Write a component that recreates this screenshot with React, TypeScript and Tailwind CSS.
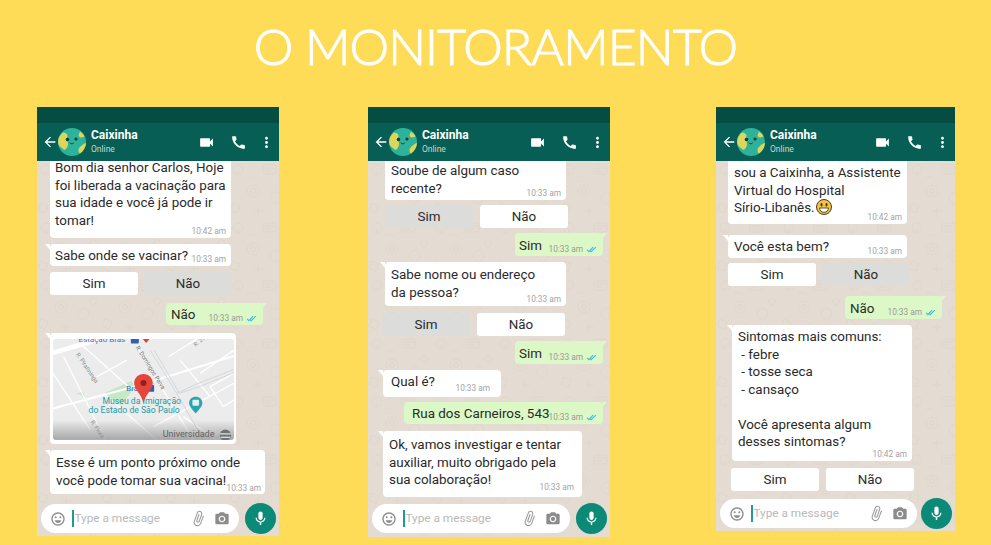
import type React from "react"
import {
  MdArrowBack,
  MdAttachFile,
  MdCall,
  MdCameraAlt,
  MdMic,
  MdMoreVert,
  MdOutlineEmojiEmotions,
  MdVideocam,
} from "react-icons/md"

const Ticks = () => (
  <svg viewBox="0 0 16 10" className="ml-[3px] h-[7px] w-[12px]" fill="none" stroke="#3fb8e8" strokeWidth="1.500">
    <path d="M1 5.500l2.600 2.600L9.500 1.500" />
    <path d="M5.500 7l1.200 1.100L13.500 1.500" />
  </svg>
)

const Avatar = () => (
  <svg viewBox="0 0 28 28" className="h-7 w-7 shrink-0">
    <circle cx="14" cy="14" r="14" fill="#2db39b" />
    <path d="M5 4.500C9 5 10.500 7.500 9 10c-1 2 1.500 3.500 1 6.500-.4 2.600-2 5-3.500 5.500C2.500 19.500 0 17 0 14 0 10 2 7 5 4.500z" fill="#dcd75c" />
    <path d="M22 3.500c2 1.500 3.500 3 4.500 5l-3 1c-2 .2-3-1-2.800-2.800z" fill="#dcd75c" />
    <path d="M28 15c-.3 4.500-2.500 8-6 10.500-2.500-2-1.500-5.500.5-7 1.500-1.500 3.500-3 5.500-3.500z" fill="#dcd75c" />
    <circle cx="9.500" cy="11.500" r="1.800" fill="#1c3b34" />
    <circle cx="18" cy="11" r="1.600" fill="#1c3b34" />
    <path d="M12 15c1 1.200 2.500 1.200 3.500 0" fill="none" stroke="#1c3b34" strokeWidth="1" strokeLinecap="round" />
  </svg>
)

const Doodles = () => (
  <svg className="absolute inset-0 h-full w-full" aria-hidden="true">
    <defs>
      <pattern id="doodle" width="64" height="58" patternUnits="userSpaceOnUse">
        <g fill="none" stroke="#dcd4c9" strokeWidth="0.7">
          <circle cx="9" cy="9" r="5" />
          <path d="M7 8h.5M11 8h.5M7 11c1.500 1 2.500 1 4 0" />
          <rect x="34" y="4" width="13" height="9" rx="2" />
          <path d="M36 7h9M36 10h6" />
          <path d="M56 20l4 4-4 4-4-4z" />
          <circle cx="24" cy="30" r="6" />
          <circle cx="24" cy="30" r="2.500" />
          <path d="M42 34c3-4 7-4 9 0s-1 8-5 9c-3-1-7-5-4-9z" />
          <path d="M4 42l7 3-3 7-7-3z" />
          <path d="M25 50h9M29 46v8" />
          <path d="M18 16c3-2 5 2 8 0" />
        </g>
      </pattern>
    </defs>
    <rect width="100%" height="100%" fill="url(#doodle)" />
  </svg>
)

const Tail = ({ right }: { right?: boolean }) =>
  right ? (
    <span className="absolute top-0 -right-[4px] h-0 w-0 border-t-[6px] border-r-[5px] border-t-[#dcf8c6] border-r-transparent" />
  ) : (
    <span className="absolute top-0 -left-[5px] h-0 w-0 border-t-[6px] border-l-[5px] border-t-white border-l-transparent" />
  )

interface BubbleProps {
  className: string
  time?: string
  tail?: boolean
  timeClass?: string
  children: React.ReactNode
}

// received message
const Bubble = ({ className, time = "10:33 am", tail, timeClass = "right-[5px] bottom-[1px]", children }: BubbleProps) => (
  <div className={`relative rounded-[4px] bg-white text-[13.400px] leading-[17.500px] whitespace-pre text-[#2a2a2a] ${className}`}>
    {tail && <Tail />}
    {children}
    <span className={`absolute text-[8.300px] leading-[11px] text-[#a3a3a3] ${timeClass}`}>{time}</span>
  </div>
)

// sent message
const Sent = ({ className, children }: { className: string; children: React.ReactNode }) => (
  <div className={`relative rounded-[4px] bg-[#dcf8c6] text-[13.400px] leading-[17.500px] text-[#2a2a2a] ${className}`}>
    <Tail right />
    {children}
    <span className="absolute right-[5px] bottom-[1px] flex items-center text-[8.300px] leading-[11px] text-[#9a9a9a]">
      10:33 am
      <Ticks />
    </span>
  </div>
)

const Choice = ({ label, selected }: { label: string; selected?: boolean }) => (
  <div
    className={`flex h-[23px] w-[88px] items-center justify-center rounded-[3px] pt-px text-[13.400px] text-[#2a2a2a] ${
      selected ? "bg-[#dcdcdb]" : "bg-white"
    }`}
  >
    {label}
  </div>
)

const InputBar = ({ className, barClass }: { className: string; barClass: string }) => (
  <div className={`relative flex items-center ${className}`}>
    <div className={`flex h-[29px] items-center rounded-full bg-white px-[9px] ${barClass}`}>
      <MdOutlineEmojiEmotions className="h-[16px] w-[16px] text-[#8c8c8c]" />
      <span className="ml-[6px] h-[17px] w-[1.500px] bg-[#1f9d8c]" />
      <span className="ml-px pt-px text-[11.800px] text-[#b9b9b9]">Type a message</span>
      <MdAttachFile className="ml-auto h-[17px] w-[17px] rotate-[20deg] text-[#9a9a9a]" />
      <MdCameraAlt className="ml-[7px] h-[16px] w-[16px] text-[#8c8c8c]" />
    </div>
    <div className="flex h-[31px] w-[31px] items-center justify-center rounded-full bg-[#0c8a78]">
      <MdMic className="h-[17px] w-[17px] text-white" />
    </div>
  </div>
)

const Phone = ({ className, children }: { className: string; children: React.ReactNode }) => (
  <div className={`flex shrink-0 flex-col [font-family:Roboto,sans-serif] ${className}`}>
    <div className="h-4 bg-[#054c43]" />
    <div className="flex h-[38px] items-center bg-[#075e54] pr-[4px] pl-[5px] text-white">
      <MdArrowBack className="h-[16px] w-[16px] shrink-0" />
      <Avatar />
      <div className="ml-[5px] flex -translate-y-px flex-col">
        <span className="text-[12px] leading-[15px] font-bold">Caixinha</span>
        <span className="mt-[1px] text-[8.500px] leading-[11px] text-[#c4d8d3]">Online</span>
      </div>
      <MdVideocam className="ml-auto h-[17px] w-[17px]" />
      <MdCall className="ml-[15px] h-[17px] w-[17px]" />
      <MdMoreVert className="ml-[11px] h-[17px] w-[17px]" />
    </div>
    <div className="relative flex flex-1 flex-col justify-between overflow-hidden bg-[#e4dcd2]">
      <Doodles />
      {children}
    </div>
  </div>
)

const MapPreview = () => (
  <svg viewBox="48 27 544 303" className="h-[101px] w-[181px] rounded-[3px] bg-[#ececec]">
    <defs>
      <linearGradient id="mapShade" x1="0" y1="0" x2="0" y2="1">
        <stop offset="0" stopColor="#8f8f8f" stopOpacity="0" />
        <stop offset="1" stopColor="#8f8f8f" stopOpacity="0.75" />
      </linearGradient>
    </defs>
    <path d="M200 190l85-38 8 22-40 52-28-12z" fill="#c5e8c6" />
    <path d="M118 190l20-5 6 16z" fill="#c5e8c6" />
    <g fill="none" stroke="#ffffff" strokeWidth="4">
      <path d="M48 236L300 168 592 78" strokeWidth="6" />
      <path d="M48 68L190 27" strokeWidth="14" />
      <path d="M80 80L205 330" />
      <path d="M130 40L280 175" />
      <path d="M48 130L160 300" />
      <path d="M200 190L360 330" />
      <path d="M300 50L470 330" />
      <path d="M180 140L270 90" />
      <path d="M395 80L480 27" />
      <path d="M430 90L520 200" />
      <path d="M490 130L592 60" />
      <path d="M520 170L592 130M520 170L560 230L592 210" />
      <path d="M350 290L592 160" />
      <path d="M440 260L540 330" />
    </g>
    <g fill="none" stroke="#d3d7d9" strokeWidth="3">
      <path d="M340 60L420 190 L480 162 L592 118" />
      <path d="M352 60L428 190 L488 170 L592 128" />
      <path d="M420 190L500 330" />
    </g>
    <rect x="48" y="270" width="544" height="60" fill="url(#mapShade)" />
    <g fontFamily="Roboto, sans-serif">
      <text x="125" y="37" fontSize="24" fill="#3f6fc4">Estação Brás</text>
      <rect x="282" y="22" width="24" height="18" rx="3" fill="#2f5fb0" />
      <path d="M318 27h20l-10 12z" fill="#d9423a" />
      <text x="0" y="0" fontSize="18" fill="#8b8f91" transform="translate(116 73) rotate(56)">R. Piratininga</text>
      <text x="0" y="0" fontSize="18" fill="#6f7375" transform="translate(296 52) rotate(58)">R. Domingos Paiva</text>
      <text x="0" y="0" fontSize="18" fill="#8b8f91" transform="translate(160 276) rotate(56)">R. Flora</text>
      <text x="0" y="0" fontSize="17" fill="#8b8f91" transform="translate(476 50) rotate(-38)">R. 21</text>
      <text x="268" y="184" fontSize="24" fill="#2f62b5">Brás</text>
      <rect x="330" y="165" width="22" height="20" rx="2" fill="#2f5fb0" />
      <text x="197" y="222" fontSize="26" fill="#249aa6">Museu da Imigração</text>
      <text x="155" y="249" fontSize="26" fill="#249aa6">do Estado de São Paulo</text>
      <text x="378" y="322" fontSize="27" fill="#5f6264">Universidade</text>
    </g>
    <circle cx="566" cy="316" r="17" fill="#6f7375" />
    <path d="M550 312h32M552 322h28" stroke="#fff" strokeWidth="3" />
    <path d="M477 200c11 0 20 8 20 19 0 10-10 19-20 32-10-13-20-22-20-32 0-11 9-19 20-19z" fill="#2aa5b0" />
    <rect x="467" y="209" width="20" height="18" rx="3" fill="#fff" opacity="0.85" />
    <path d="M320 132c15 0 28 12 28 27 0 20-20 30-28 60-8-30-28-40-28-60 0-15 13-27 28-27z" fill="#e5453a" />
    <circle cx="320" cy="159" r="9" fill="#8f2219" />
  </svg>
)

const Smiley = () => (
  <svg viewBox="0 0 16 16" className="ml-[1px] inline-block h-[16px] w-[16px] align-[-3px]">
    <circle cx="8" cy="8" r="7.500" fill="#f3c343" stroke="#4a3a1a" />
    <ellipse cx="5.500" cy="5.800" rx="1" ry="1.700" fill="#3c2c10" />
    <ellipse cx="10.500" cy="5.800" rx="1" ry="1.700" fill="#3c2c10" />
    <path d="M3.500 9h9c0 2.500-2 4.300-4.500 4.300S3.500 11.500 3.500 9z" fill="#fff" stroke="#3c2c10" strokeWidth="0.800" />
  </svg>
)

export default function App() {
  return (
    <div className="h-[545px] w-[991px] overflow-hidden bg-[#ffdc58]">
      <h1 className="pt-[14px] text-center text-[50px] leading-[64px] font-light tracking-[-0.9px] text-white [-webkit-text-stroke:1px_white] [font-family:Lato,sans-serif]">
        O MONITORAMENTO
      </h1>
      <div className="mt-[29px] flex items-start pl-[37px]">
        <Phone className="h-[429px] w-[242px]">
          <div className="relative flex flex-col">
            <Bubble className="-mt-[10px] ml-[13px] h-[87px] w-[181px] pt-[8px] pl-[5px]" time="10:42 am">
              {"Bom dia senhor Carlos, Hoje\nfoi liberada a vacinação para\nsua idade e você já pode ir\ntomar!"}
            </Bubble>
            <Bubble tail className="mt-[6px] ml-[13px] h-[22px] w-[181px] pt-[3px] pl-[5px]">
              Sabe onde se vacinar?
            </Bubble>
            <div className="mt-[6px] ml-[13px] flex gap-[6px]">
              <Choice label="Sim" />
              <Choice label="Não" selected />
            </div>
            <Sent className="mt-[8px] ml-[129px] h-[22px] w-[97px] pt-[3px] pl-[5px]">Não</Sent>
            <div className="relative mt-[8px] ml-[13px] h-[111px] w-[186px] rounded-[4px] bg-white pt-[6px] pl-[3px]">
              <Tail />
              <MapPreview />
            </div>
            <Bubble tail className="mt-[6px] ml-[13px] h-[44px] w-[215px] pt-[4px] pl-[6px]" timeClass="right-[4px] bottom-[0px]">
              {"Esse é um ponto próximo onde\nvocê pode tomar sua vacina!"}
            </Bubble>
          </div>
          <InputBar className="mb-[2px] ml-[4px] gap-[6px]" barClass="w-[198px]" />
        </Phone>

        <Phone className="ml-[89px] h-[430px] w-[242px]">
          <div className="relative flex flex-col">
            <Bubble className="-mt-[10px] ml-[17px] h-[49px] w-[181px] pt-[11px] pl-[6px]">
              {"Soube de algum caso\nrecente?"}
            </Bubble>
            <div className="mt-[5px] ml-[17px] flex gap-[7px]">
              <Choice label="Sim" selected />
              <Choice label="Não" />
            </div>
            <Sent className="mt-[5px] ml-[147px] h-[23px] w-[88px] pt-[4px] pl-[4px]">Sim</Sent>
            <Bubble tail className="mt-[6px] ml-[17px] h-[44px] w-[181px] pt-[4px] pl-[6px]">
              {"Sabe nome ou endereço\nda pessoa?"}
            </Bubble>
            <div className="mt-[7px] ml-[14px] flex gap-[7px]">
              <Choice label="Sim" selected />
              <Choice label="Não" />
            </div>
            <Sent className="mt-[5px] ml-[147px] h-[23px] w-[88px] pt-[4px] pl-[4px]">Sim</Sent>
            <Bubble tail className="mt-[6px] ml-[15px] h-[27px] w-[118px] pt-[3px] pl-[8px]" timeClass="right-[11px] bottom-[3px]">
              Qual é?
            </Bubble>
            <Sent className="mt-[5px] ml-[36px] h-[22px] w-[199px] pt-[3px] pl-[8px]">Rua dos Carneiros, 543</Sent>
            <Bubble tail className="mt-[7px] ml-[15px] h-[66px] w-[199px] pt-[5px] pl-[6px]" timeClass="right-[8px] bottom-[4px]">
              {"Ok, vamos investigar e tentar\nauxiliar, muito obrigado pela\nsua colaboração!"}
            </Bubble>
          </div>
          <InputBar className="mb-[3px] ml-[4px] gap-[6px]" barClass="w-[198px]" />
        </Phone>

        <Phone className="ml-[106px] h-[424px] w-[239px]">
          <div className="relative flex flex-col">
            <Bubble className="-mt-[10px] ml-[12px] h-[73px] w-[179px] pt-[13px] pl-[6px]" time="10:42 am">
              {"sou a Caixinha, a Assistente\nVirtual do Hospital\nSírio-Libanês."}
              <Smiley />
            </Bubble>
            <Bubble tail className="mt-[11px] ml-[12px] h-[23px] w-[179px] pt-[3px] pl-[6px]">
              Você esta bem?
            </Bubble>
            <div className="mt-[5px] ml-[12px] flex gap-[6px]">
              <Choice label="Sim" />
              <Choice label="Não" selected />
            </div>
            <Sent className="mt-[10px] ml-[129px] h-[23px] w-[97px] pt-[4px] pl-[5px]">Não</Sent>
            <Bubble tail className="mt-[6px] ml-[16px] h-[136px] w-[180px] pt-[3px] pl-[6px]" time="10:42 am">
              {"Sintomas mais comuns:\n - febre\n - tosse seca\n - cansaço\n\nVocê apresenta algum\ndesses sintomas?"}
            </Bubble>
            <div className="mt-[7px] ml-[15px] flex gap-[7px]">
              <Choice label="Sim" />
              <Choice label="Não" />
            </div>
          </div>
          <InputBar className="mb-[2px] ml-[4px] gap-[4px]" barClass="w-[197px]" />
        </Phone>
      </div>
    </div>
  )
}
